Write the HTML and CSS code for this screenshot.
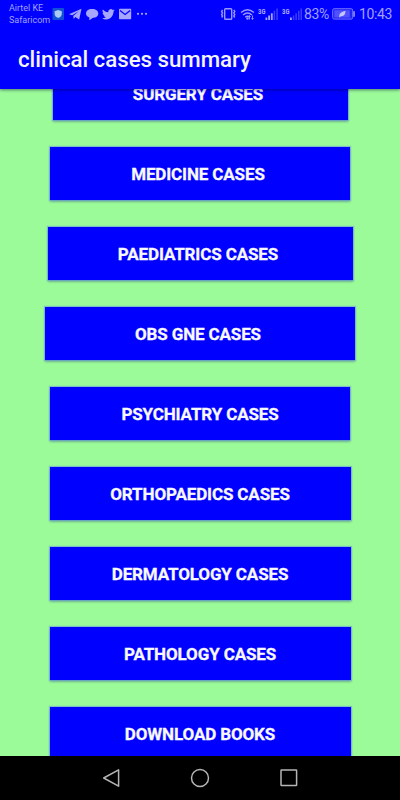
FILE: index.html
```html
<!DOCTYPE html>
<html lang="en">
<head>
<meta charset="utf-8">
<title>clinical cases summary</title>
<link rel="stylesheet" href="styles.css">
</head>
<body>
<header class="top">
  <div class="status">
    <div class="carrier"><span>Airtel KE</span><span>Safaricom</span></div>
    <svg class="notes" width="96" height="14" viewBox="0 0 96 14">
      <rect x="0.5" y="1" width="11.5" height="12" rx="1" fill="#1250d6"/>
      <path d="M6.2 3 L9.8 4.2 V7 Q9.6 9.8 6.2 11 Q2.8 9.8 2.6 7 V4.2Z" fill="#a9c9f8"/>
      <path d="M17 7.2 L29.5 1.8 L27.2 12.6 L23.3 9.9 L21.8 12 L21.2 9 L27 4 L20.2 8.3Z" fill="#a6a6ff"/>
      <path d="M40 2 C44 2 46.3 4 46.3 6.6 S44 11 40.5 11 Q38.5 13 36.8 13 Q37.6 11.8 37.4 10.6 C35 9.8 34 8.3 34 6.6 C34 4 36.3 2 40 2Z" fill="#a6a6ff"/>
      <path transform="translate(50 .9) scale(.53)" d="M23.95 4.57a10 10 0 0 1-2.82.77 4.96 4.96 0 0 0 2.16-2.72c-.95.55-2 .95-3.12 1.18a4.92 4.92 0 0 0-8.38 4.48C7.69 8.1 4.07 6.13 1.64 3.16a4.82 4.82 0 0 0-.67 2.47c0 1.71.87 3.21 2.19 4.1a4.9 4.9 0 0 1-2.23-.62v.06a4.92 4.92 0 0 0 3.95 4.83 5 5 0 0 1-2.21.08 4.94 4.94 0 0 0 4.6 3.42A9.87 9.87 0 0 1 0 19.54a13.99 13.99 0 0 0 7.56 2.21c9.05 0 14-7.5 14-13.98 0-.21 0-.42-.02-.63a9.94 9.94 0 0 0 2.46-2.55z" fill="#a6a6ff"/>
      <rect x="67" y="1.8" width="12.2" height="10.4" rx=".8" fill="#a6a6ff"/>
      <path d="M68 3.5 L73.1 7.5 L78.2 3.5" fill="none" stroke="#0000ff" stroke-width="1.2"/>
      <g fill="#a6a6ff"><circle cx="86" cy="6.8" r="1.1"/><circle cx="90" cy="6.8" r="1.1"/><circle cx="94" cy="6.8" r="1.1"/></g>
    </svg>
    <svg class="radio" width="84" height="16" viewBox="0 0 84 16">
      <g fill="none" stroke="#9797ff" stroke-width="1.4">
        <rect x="4.7" y="2.7" width="7" height="10.6" rx=".8"/>
        <path d="M2.6 4 L1.6 5.5 L2.6 7 L1.6 8.5 L2.6 10 L1.6 11.5 M13.8 4 L14.8 5.5 L13.8 7 L14.8 8.5 L13.8 10 L14.8 11.5"/>
        <path d="M21 6.5 Q27.5 .8 34 6.5 M23 9 Q27.5 5 32 9 M25.2 11.2 Q27.5 9.3 29.8 11.2"/>
      </g>
      <circle cx="27.5" cy="12.5" r="1.2" fill="#9797ff"/>
      <path d="M29.5 13.5 V9.8 M28.5 10.8 L29.5 9.5 L30.5 10.8 M32.5 9.5 V13.3 M31.5 12.2 L32.5 13.5 L33.5 12.2" fill="none" stroke="#9797ff" stroke-width=".9"/>
      <g fill="#a6a6ff">
        <rect x="45.5" y="11.5" width="1.8" height="2.5"/><rect x="48.2" y="9.5" width="1.8" height="4.5"/><rect x="50.9" y="7.3" width="1.8" height="6.7"/>
        <rect x="70" y="11.5" width="1.8" height="2.5"/>
      </g>
      <g fill="#3c3cff">
        <rect x="53.6" y="4.8" width="1.5" height="9.2"/><rect x="56.3" y="2.5" width="1.5" height="11.5"/>
        <rect x="72.8" y="9.5" width="1.5" height="4.5"/><rect x="75.4" y="7.3" width="1.5" height="6.7"/><rect x="78" y="4.8" width="1.5" height="9.2"/><rect x="80.5" y="2.5" width="1.5" height="11.5"/>
      </g>
      <text class="net" x="38" y="7.6" textLength="7.4" lengthAdjust="spacingAndGlyphs">3G</text>
      <text class="net" x="62" y="7.6" textLength="7.4" lengthAdjust="spacingAndGlyphs">3G</text>
    </svg>
    <span class="percent">83%</span>
    <svg class="battery" width="24" height="12" viewBox="0 0 24 12">
      <rect x=".7" y=".7" width="20" height="10.4" rx="1.5" fill="#2020f8" stroke="#7272ff"/>
      <rect x="2.3" y="2.2" width="15.5" height="7.4" fill="#5050ff"/>
      <path d="M21.3 3.2 H22.8 V8.7 H21.3Z" fill="#9c9cff"/>
      <path d="M7.2 9 Q6.7 4.3 13.5 2.8 Q13.4 8.8 8.8 8.2 L7.8 9.4Z" fill="#c6c6ff"/>
    </svg>
    <span class="clock">10:43</span>
  </div>
  <h1 class="title">clinical cases summary</h1>
</header>
<main class="list">
  <button class="case w295">SURGERY CASES&nbsp;</button>
  <button class="case w300">MEDICINE CASES&nbsp;</button>
  <button class="case w305">PAEDIATRICS CASES&nbsp;</button>
  <button class="case w310">OBS GNE CASES&nbsp;</button>
  <button class="case w300">PSYCHIATRY CASES</button>
  <button class="case">ORTHOPAEDICS CASES</button>
  <button class="case">DERMATOLOGY CASES</button>
  <button class="case">PATHOLOGY CASES</button>
  <button class="case">DOWNLOAD BOOKS</button>
</main>
<nav class="nav">
  <svg width="20" height="20" viewBox="0 0 20 20"><path d="M2.7 10 L17.6 1.8 V18.2Z"/></svg>
  <svg width="20" height="20" viewBox="0 0 20 20"><circle cx="10" cy="10" r="8.5"/></svg>
  <svg width="20" height="20" viewBox="0 0 20 20"><rect x="2" y="2" width="15.6" height="15.6" rx=".5"/></svg>
</nav>
</body>
</html>
```
FILE: styles.css
```css
* { box-sizing: border-box; }
body {
  margin: 0;
  width: 400px;
  height: 800px;
  overflow: hidden;
  display: flex;
  flex-direction: column;
  background: #9bfb98;
  font-family: Roboto, sans-serif;
}
.top {
  position: relative;
  z-index: 1;
  flex: none;
  height: 89px;
  background: #0000ff;
  box-shadow: 0 1px 3px rgba(0, 0, 60, .5);
}
.status {
  display: flex;
  align-items: center;
  height: 28px;
  padding-left: 9px;
  color: #a0a0ff;
}
.carrier {
  display: flex;
  flex-direction: column;
  width: 43px;
  font-size: 9px;
  line-height: 12px;
  white-space: nowrap;
}
.radio { margin-left: 72px; }
.net { font-size: 6.8px; font-weight: 700; fill: #b0b0ff; }
.percent { width: 28px; font-size: 14px; letter-spacing: -.4px; }
.battery { margin-right: 3px; }
.clock { font-size: 14px; letter-spacing: -.4px; }
.title {
  margin: 0;
  padding-left: 18px;
  font-size: 22.3px;
  font-weight: 500;
  line-height: 62px;
  letter-spacing: -.04px;
  color: #f4f4ff;
  white-space: nowrap;
}
.list {
  flex: 1;
  min-height: 0;
  overflow: hidden;
  display: flex;
  flex-direction: column;
  align-items: center;
  gap: 27px;
}
.case {
  flex: none;
  width: 301px;
  height: 53px;
  padding: 1px 0 0;
  border: 0;
  background: #0000ff;
  color: #f8f8ff;
  font: 700 17px/52px Roboto, sans-serif;
  letter-spacing: -.13px;
  -webkit-text-stroke: .3px #f8f8ff;
  box-shadow: 0 0 1px 1px rgba(100, 145, 240, .55), 0 2px 2px rgba(30, 60, 100, .35);
}
.case:first-child { margin-top: -22px; }
.w295 { width: 295px; }
.w300 { width: 300px; }
.w305 { width: 305px; }
.w310 { width: 310px; }
.nav {
  flex: none;
  display: flex;
  justify-content: center;
  gap: 69px;
  height: 44px;
  padding-top: 12px;
  background: #000;
}
.nav svg { fill: none; stroke: #b5b5b5; stroke-width: 1.5; stroke-linejoin: round; }
```
